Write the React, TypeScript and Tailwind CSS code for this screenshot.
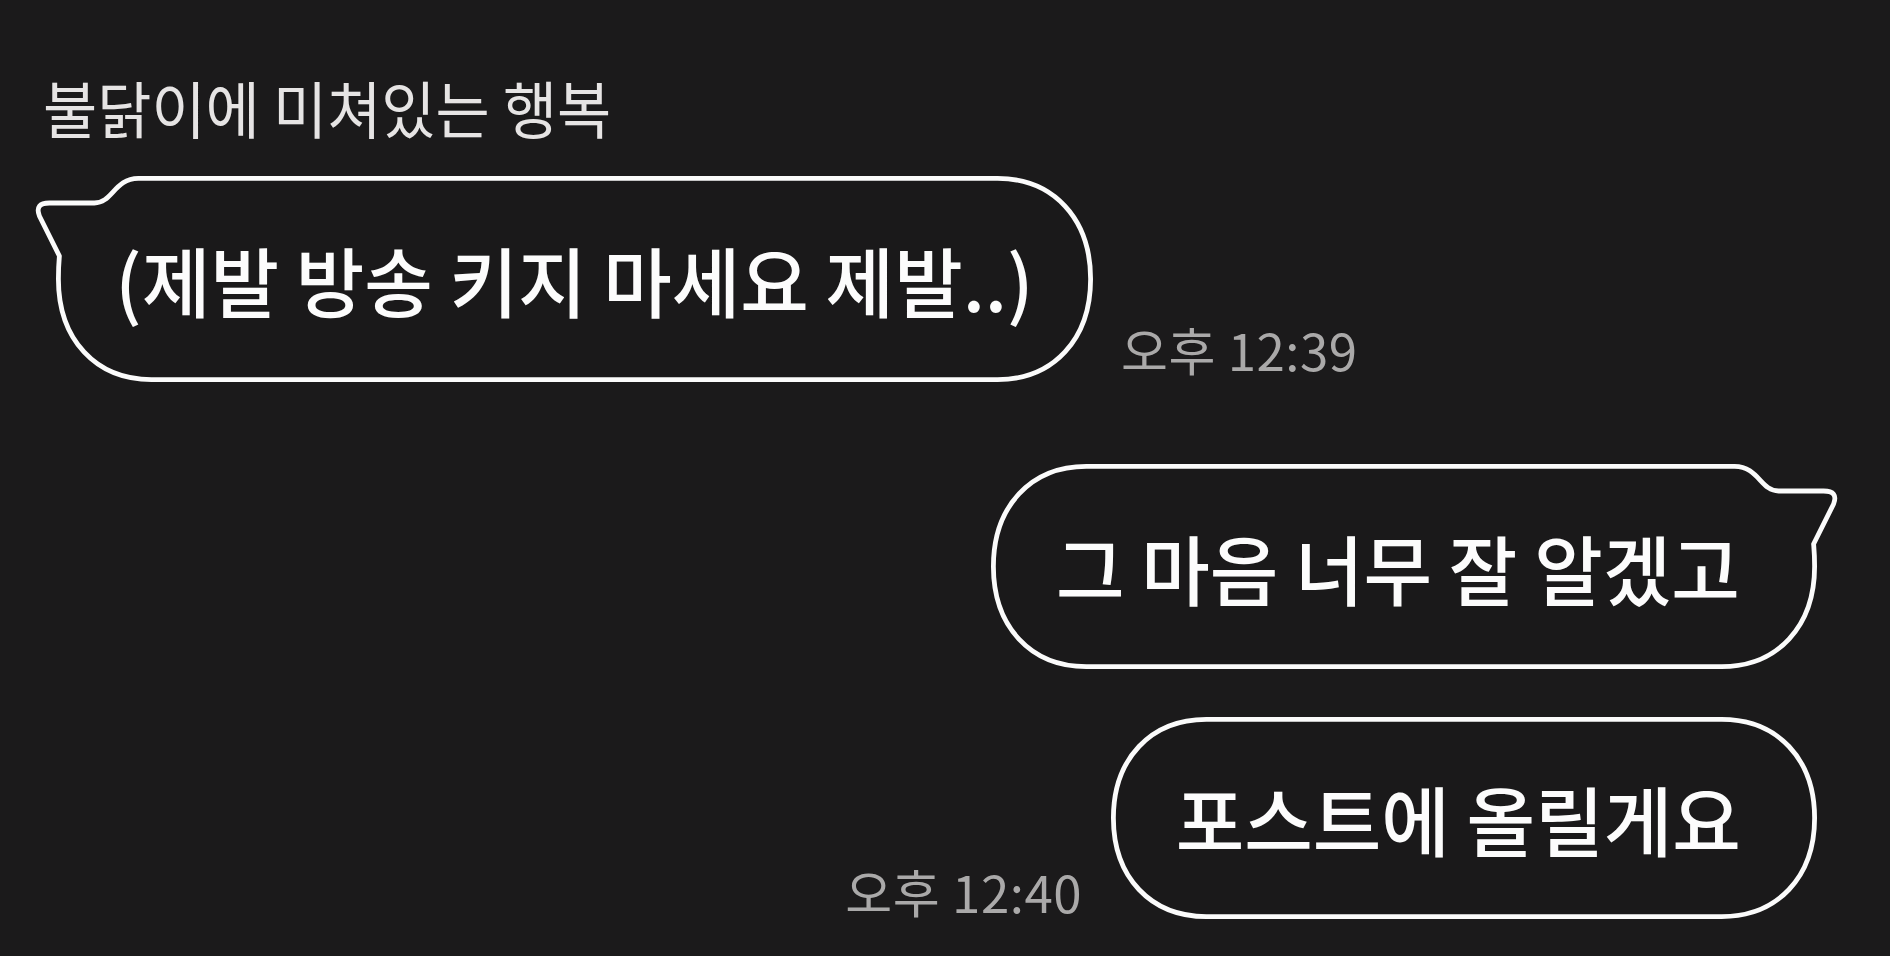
import type { ReactNode } from 'react';

type Tail = 'left' | 'right' | 'none';

interface BubbleProps {
  width: number;
  height: number;
  tail: Tail;
  className: string;
  children: ReactNode;
}

// builds the outline of a chat bubble, tail on the right side
const bubblePath = (w: number, h: number, tail: boolean) => {
  const i = 2.4;
  const L = i;
  const R = w - i;
  const T = i;
  const B = h - i;
  const cy = h / 2;
  const rx = 93;
  const ry = cy - i;
  const k = 0.6;

  const topRight = tail
    ? [
        `L ${R - 80} ${T}`,
        `C ${R - 56} ${T} ${R - 54} ${27} ${R - 36} ${27}`,
        `L ${R + 9} ${27}`,
        `Q ${R + 24} ${27} ${R + 19} ${40}`,
        `L ${R - 1} ${80}`,
        `C ${R - 0.3} ${88} ${R} ${cy - 12} ${R} ${cy}`,
      ]
    : [`L ${R - rx} ${T}`, `C ${R - rx + k * rx} ${T} ${R} ${cy - k * ry} ${R} ${cy}`];

  return [
    `M ${L + rx} ${T}`,
    ...topRight,
    `C ${R} ${cy + k * ry} ${R - rx + k * rx} ${B} ${R - rx} ${B}`,
    `L ${L + rx} ${B}`,
    `C ${L + rx - k * rx} ${B} ${L} ${cy + k * ry} ${L} ${cy}`,
    `C ${L} ${cy - k * ry} ${L + rx - k * rx} ${T} ${L + rx} ${T}`,
    'Z',
  ].join(' ');
};

const Bubble = ({ width, height, tail, className, children }: BubbleProps) => {
  const d = bubblePath(width, height, tail !== 'none');
  return (
    <div className={`relative flex items-center justify-center shrink-0 ${className}`}>
      <svg
        className="absolute inset-0 overflow-visible"
        width={width}
        height={height}
        viewBox={`0 0 ${width} ${height}`}
      >
        <g transform={tail === 'left' ? `translate(${width} 0) scale(-1 1)` : undefined}>
          <path d={d} fill="#1a191a" stroke="#fbfbfb" strokeWidth={4.8} strokeLinejoin="round" />
        </g>
      </svg>
      <span className="relative text-[76px] leading-none font-medium text-[#fcfcfc] whitespace-nowrap scale-x-[0.98]">
        {children}
      </span>
    </div>
  );
};

const Time = ({ children, className }: { children: ReactNode; className: string }) => (
  <span className={`text-[51px] leading-none tracking-[0.5px] text-[#aaa9a9] whitespace-nowrap ${className}`}>
    {children}
  </span>
);

export default function App() {
  return (
    <div className="min-h-screen w-full overflow-hidden bg-[#1b1a1b] font-['Noto_Sans_CJK_KR',sans-serif]">
      <div className="flex flex-col pl-[43px] pr-[73px] pt-[76px]">
        <div className="text-[62px] leading-none text-[#e6e4e4] whitespace-nowrap origin-left scale-x-[0.95]">
          불닭이에 미쳐있는 행복
        </div>

        <div className="flex items-end gap-[28px] mt-[38px] ml-[13px]">
          <Bubble width={1037} height={206} tail="left" className="w-[1037px] h-[206px]">
            (제발 방송 키지 마세요 제발..)
          </Bubble>
          <Time className="mb-[7px]">오후 12:39</Time>
        </div>

        <div className="flex justify-end mt-[82px]">
          <Bubble width={826} height={205} tail="right" className="w-[826px] h-[205px] pr-[12px]">
            그 마음 너무 잘 알겠고
          </Bubble>
        </div>

        <div className="flex justify-end items-end gap-[29px] mt-[48px]">
          <Time className="mb-[2px]">오후 12:40</Time>
          <Bubble width={706} height={202} tail="none" className="w-[706px] h-[202px] pr-[12px]">
            포스트에 올릴게요
          </Bubble>
        </div>
      </div>
    </div>
  );
}
